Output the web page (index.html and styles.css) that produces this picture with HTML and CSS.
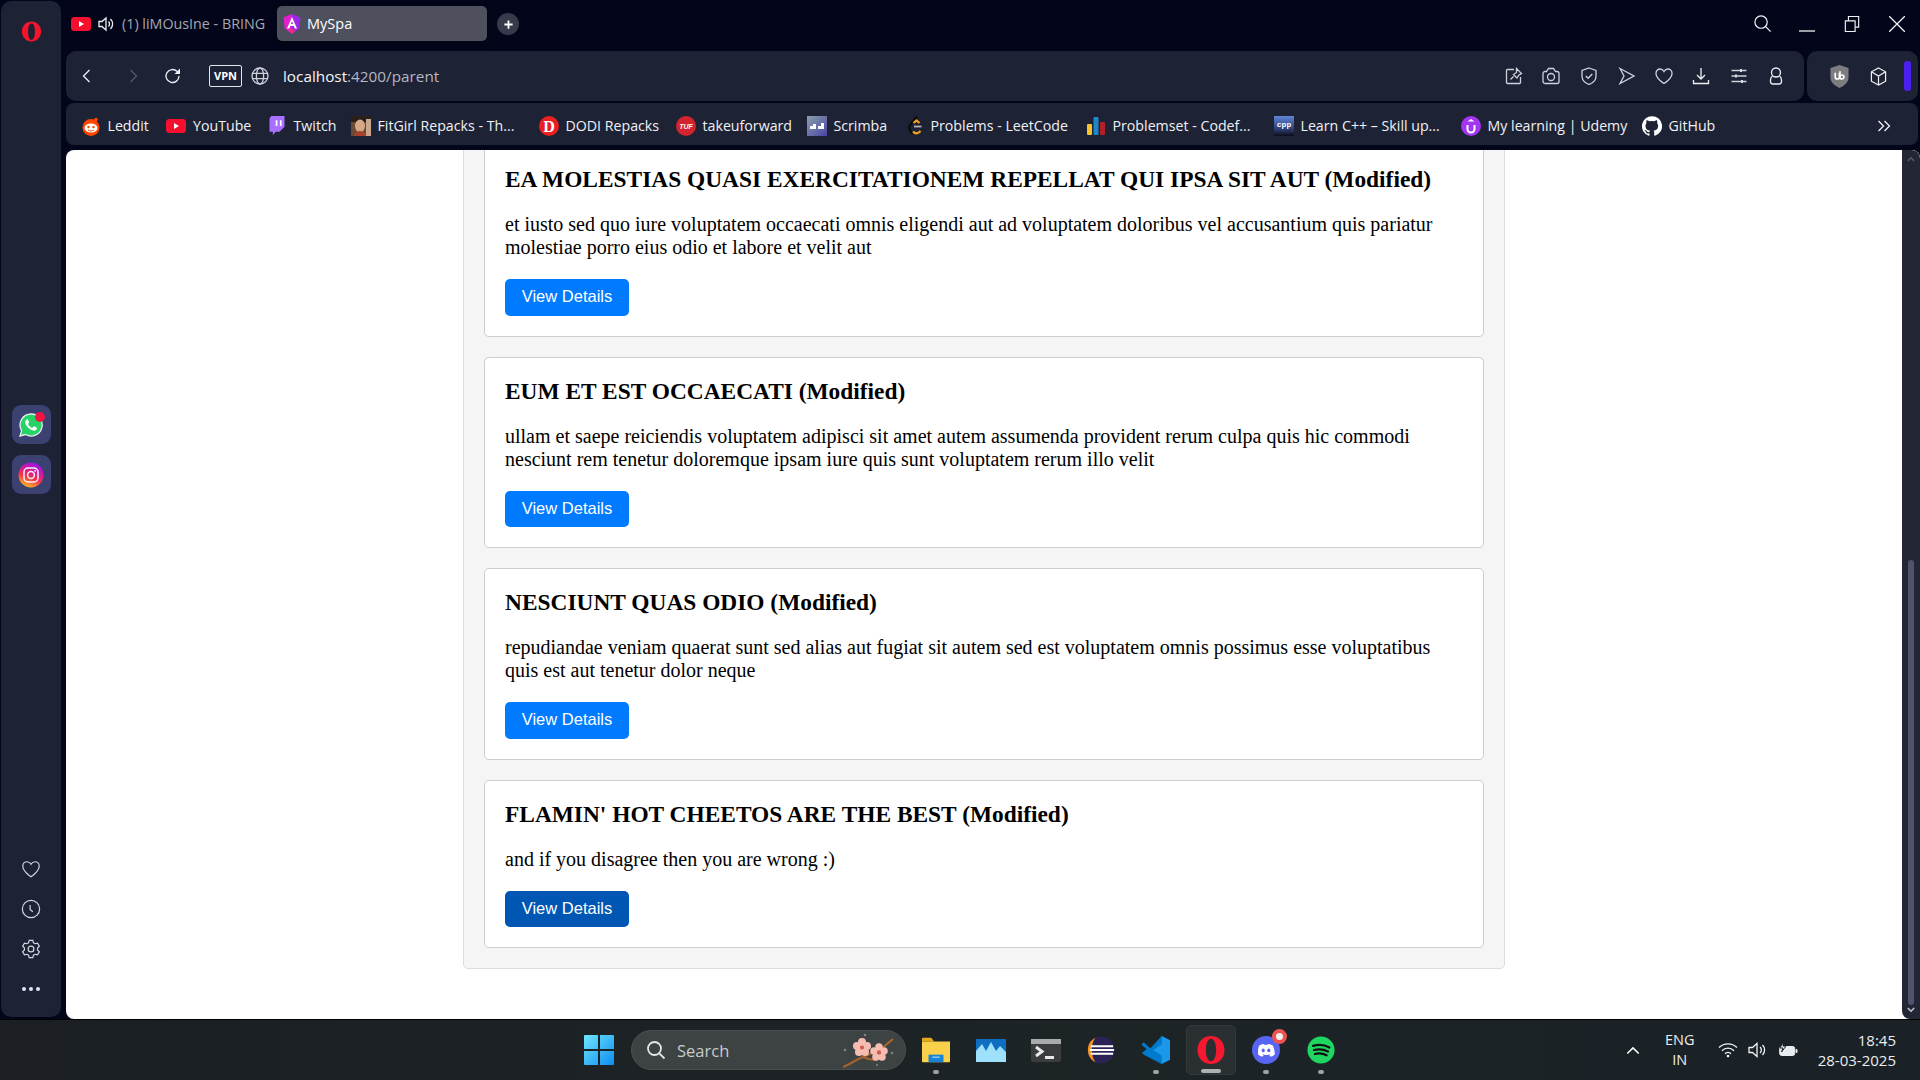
FILE: index.html
```html
<!DOCTYPE html>
<html lang="en">
<head>
<meta charset="utf-8">
<title>MySpa</title>
<link rel="stylesheet" href="styles.css">
</head>
<body>
<div class="desktop">
  <div class="browser">
    <aside class="sidebar">
      <svg class="opera-logo" viewBox="0 0 22 22"><path fill="#f4142b" fill-rule="evenodd" d="M11 0.500C5 0.500 1 5.200 1 11s4 10.500 10 10.500S21 16.800 21 11 17 .5 11 .5zm0 1.800c2.300 0 3.600 3.900 3.600 8.700s-1.300 8.700-3.600 8.700-3.600-3.900-3.600-8.700 1.300-8.700 3.600-8.700z"/></svg>
      <div class="tiles">
        <div class="tile">
          <svg class="tile-icon" viewBox="0 0 26 26"><path fill="#25d366" stroke="#e9ecef" stroke-width="1.300" d="M13 2a11 11 0 0 0-9.400 16.600L2 24l5.600-1.500A11 11 0 1 0 13 2z"/><path fill="#fff" d="M9 7.500c-.8 0-1.800 1.300-1.800 2.800 0 3 4.500 7.900 8.700 8.300 1.700.1 3-1.100 3-2.200 0-.6-.1-.8-.5-1l-2.200-1.100c-.4-.2-.6 0-.9.400l-.7.900c-.2.200-.5.300-.9.100-1.700-.8-2.800-1.900-3.600-3.500-.2-.3 0-.6.200-.8l.6-.7c.2-.3.200-.5.100-.8l-1-2.200c-.2-.5-.5-.6-1-.6z"/></svg>
          <span class="badge"></span>
        </div>
        <div class="tile">
          <svg class="tile-icon" viewBox="0 0 26 26"><defs><linearGradient id="ig" x1="0.300" y1="1" x2="0.700" y2="0"><stop offset="0" stop-color="#fdc01f"/><stop offset="0.400" stop-color="#f2304f"/><stop offset="0.750" stop-color="#c913b9"/><stop offset="1" stop-color="#8a1ce8"/></linearGradient></defs><circle cx="13" cy="13" r="12.500" fill="url(#ig)"/><rect x="6" y="6" width="14" height="14" rx="4" fill="none" stroke="#f3f3f6" stroke-width="1.500"/><circle cx="13" cy="13" r="3.400" fill="none" stroke="#f3f3f6" stroke-width="1.500"/><circle cx="17.200" cy="8.800" r="1" fill="#f3f3f6"/></svg>
        </div>
      </div>
      <div class="side-tools">
        <svg class="side-icon" viewBox="0 0 22 22"><path class="line" d="M11 19.500S2 14 2 7.800C2 5 4 3 6.500 3 8.400 3 10 4 11 5.800 12 4 13.600 3 15.500 3 18 3 20 5 20 7.800 20 14 11 19.500 11 19.500z"/></svg>
        <svg class="side-icon" viewBox="0 0 22 22"><circle class="line" cx="11" cy="11" r="9.500"/><path class="line" d="M10 6.500v5l3 2.500"/></svg>
        <svg class="side-icon" viewBox="0 0 22 22"><path class="line" d="M9 1.500h4l.7 2.700 1.800 1 2.700-.7 2 3.400-2 2v2.200l2 2-2 3.400-2.700-.7-1.800 1-.7 2.700H9l-.7-2.700-1.800-1-2.700.7-2-3.400 2-2V9.900l-2-2 2-3.400 2.700.7 1.800-1z"/><circle class="line" cx="11" cy="11" r="3.200"/></svg>
        <div class="more-dots"><i></i><i></i><i></i></div>
      </div>
    </aside>

    <div class="main">
      <div class="tabstrip">
        <div class="tab-idle">
          <svg class="fav" viewBox="0 0 20 20"><rect y="3" width="20" height="14" rx="3.500" fill="#f70f2f"/><path fill="#fff" d="M8 7l5 3-5 3z"/></svg>
          <svg class="tab-speaker" viewBox="0 0 18 18"><path class="line-w" d="M2 6.500h3L9 3v12l-4-3.500H2z"/><path class="line-w" d="M11.500 6.500a3.500 3.500 0 0 1 0 5M13.500 4a7 7 0 0 1 0 10"/></svg>
          <span class="tab-title-dim">(1) liMOusIne - BRING</span>
        </div>
        <div class="tab-active">
          <svg class="fav" viewBox="0 0 20 20"><path fill="#e41fd0" d="M10 0L1.500 3.500l1.300 11L10 20z"/><path fill="#9c27e8" d="M10 0l8.500 3.500-1.300 11L10 20z"/><path fill="#fff" d="M10 3L5 14.500h2.200l1-2.500h3.600l1 2.500H15zm-1.100 7L10 7.300l1.100 2.700z"/><path fill="#ff2a6d" d="M6.500 15.500h7L10 20z"/></svg>
          <span class="tab-title">MySpa</span>
        </div>
        <div class="new-tab">
          <svg viewBox="0 0 12 12"><path d="M6 1.500v9M1.500 6h9" stroke="#fff" stroke-width="2" fill="none"/></svg>
        </div>
        <div class="win-controls">
          <svg class="win-search" viewBox="0 0 20 20"><circle class="line-w" cx="8.500" cy="8.500" r="6.500"/><path class="line-w" d="M13.300 13.300L18.500 18.500"/></svg>
          <svg class="win-btn win-min" viewBox="0 0 16 16"><path class="line-w" d="M0 15h16"/></svg>
          <svg class="win-btn" viewBox="0 0 16 18"><path class="line-w" d="M.5 5.500h11v12H.5z"/><path class="line-w" d="M4 5.500V.5h11.500v12H11.500"/></svg>
          <svg class="win-btn" viewBox="0 0 16 16"><path class="line-w" d="M0 0l16 16M16 0L0 16"/></svg>
        </div>
      </div>

      <div class="toolbar">
        <div class="addressbar">
          <svg class="nav-back" viewBox="0 0 16 16"><path class="line-b" d="M10.500 2L4.500 8l6 6"/></svg>
          <svg class="nav-forward" viewBox="0 0 16 16"><path class="line-dim" d="M5.500 2l6 6-6 6"/></svg>
          <svg class="nav-reload" viewBox="0 0 18 18"><path class="line-b" d="M15 9a6.500 6.500 0 1 1-2-4.700L15 6"/><path fill="#eef0f4" d="M16 1.500V7h-5.500z"/></svg>
          <div class="vpn">VPN</div>
          <svg class="globe" viewBox="0 0 18 18"><circle class="line-g" cx="9" cy="9" r="8"/><ellipse class="line-g" cx="9" cy="9" rx="3.600" ry="8"/><path class="line-g" d="M1.500 6.300h15M1.500 11.700h15"/></svg>
          <div class="url"><span class="url-host">localhost</span><span class="url-rest">:4200/parent</span></div>
          <div class="tools">
            <span class="tool"><svg viewBox="0 0 18 18"><path class="line-g" d="M9 2.500H2.500a1 1 0 0 0-1 1v12a1 1 0 0 0 1 1h12a1 1 0 0 0 1-1V10"/><path class="line-g" d="M11.500 1.500l5 5-2.500 1.500-2 3-3.500-3.500 3-2zM8.500 9.500l-3 3"/></svg></span>
            <span class="tool"><svg viewBox="0 0 18 18"><path class="line-g" d="M1 6.500a2 2 0 0 1 2-2h1.500l2-3h5l2 3H15a2 2 0 0 1 2 2v8a2 2 0 0 1-2 2H3a2 2 0 0 1-2-2z"/><circle class="line-g" cx="9" cy="10" r="3.500"/></svg></span>
            <span class="tool"><svg viewBox="0 0 18 18"><path class="line-g" d="M9 1l7 2.500V9c0 4-3 7-7 8.500C5 16 2 13 2 9V3.500z"/><path class="line-g" d="M5.800 9l2.300 2.300 4.200-4.300"/></svg></span>
            <span class="tool"><svg viewBox="0 0 18 18"><path class="line-g" d="M3 1.500L17 9 3 16.500 7 9z"/></svg></span>
            <span class="tool"><svg viewBox="0 0 18 18"><path class="line-g" d="M9 16.500S1 12 1 6.300C1 3.700 2.900 2 5 2c1.800 0 3.200 1 4 2.500C9.800 3 11.200 2 13 2c2.100 0 4 1.700 4 4.300C17 12 9 16.500 9 16.500z"/></svg></span>
            <span class="tool"><svg viewBox="0 0 18 18"><path class="line-b" d="M9 1v10.500M5 8l4 4 4-4M1.500 13v3.500h15V13"/></svg></span>
            <span class="tool"><svg viewBox="0 0 18 18"><path class="line-g" d="M1.500 3.500h15M1.500 9h15M1.500 14.500h15"/><path fill="#d9dbe3" d="M10 2h2v3h-2zM5 7.500h2v3H5zM11 13h2v3h-2z"/></svg></span>
            <span class="tool"><svg viewBox="0 0 18 18"><circle class="line-b" cx="9" cy="5.500" r="4.500"/><path class="line-b" d="M5.500 9a5 5 0 0 0-2 4v1.500a2.500 2.500 0 0 0 2.500 2.500h6a2.500 2.500 0 0 0 2.500-2.500V13a5 5 0 0 0-2-4"/></svg></span>
          </div>
        </div>
        <div class="extensions">
          <svg class="ext-shield" viewBox="0 0 20 24"><path fill="#7d7d80" d="M10 0l9.500 3v10c0 5-4 8.500-9.500 11C4.500 21.500.5 18 .5 13V3z"/><path fill="none" stroke="#fff" stroke-width="1.700" d="M5.500 8v4.500a2.200 2.200 0 0 0 4.400 0V8M10.500 6.500v6a2.100 2.100 0 1 0 4.200 0 2.100 2.100 0 1 0-4.200 0"/></svg>
          <svg class="ext-box" viewBox="0 0 18 20"><path class="line-w" d="M9 1l7.500 4v10L9 19l-7.500-4V5zM1.500 5L9 9.500 16.500 5M9 9.500V19"/></svg>
          <span class="ext-bar"></span>
        </div>
      </div>

      <nav class="bookmarks">
        <a class="bm"><svg class="fav" viewBox="0 0 20 20"><circle cx="10" cy="11.500" r="8.500" fill="#ff4500"/><ellipse cx="10" cy="12" rx="6.500" ry="4.500" fill="#fff"/><circle cx="7.500" cy="11" r="1.200" fill="#ff4500"/><circle cx="12.500" cy="11" r="1.200" fill="#ff4500"/><circle cx="15" cy="3.500" r="1.800" fill="#ff4500"/><path d="M7 14c2 1.300 4 1.300 6 0" stroke="#ff4500" fill="none"/></svg><span>Leddit</span></a>
        <a class="bm"><svg class="fav" viewBox="0 0 20 20"><rect y="3" width="20" height="14" rx="3.500" fill="#f70f2f"/><path fill="#fff" d="M8 7l5 3-5 3z"/></svg><span>YouTube</span></a>
        <a class="bm"><svg class="fav" viewBox="0 0 20 24"><path fill="#a970ff" d="M3 0h16v13l-6 6H8.500L5 23v-4H1V3z"/><path fill="#fff" d="M8.500 5h2v7h-2zM13.500 5h2v7h-2z"/></svg><span>Twitch</span></a>
        <a class="bm"><svg class="fav" viewBox="0 0 20 20"><rect width="20" height="20" fill="#6b4a33"/><rect width="20" height="6" fill="#2a2019"/><ellipse cx="9" cy="10" rx="5" ry="6.500" fill="#d5a88a"/><path d="M3 20c1-4 4-5 6-5s5 1 7 5z" fill="#a8402e"/><rect x="15" y="3" width="5" height="17" fill="#caa78c"/></svg><span>FitGirl Repacks - Th...</span></a>
        <a class="bm"><svg class="fav" viewBox="0 0 20 20"><circle cx="10" cy="10" r="10" fill="#e8201f"/><text class="fav-letter" x="10" y="15.500" text-anchor="middle">D</text></svg><span>DODI Repacks</span></a>
        <a class="bm"><svg class="fav" viewBox="0 0 20 20"><circle cx="10" cy="10" r="10" fill="#d2232e"/><text class="fav-tuf" x="10" y="12.500" text-anchor="middle">TUF</text></svg><span>takeuforward</span></a>
        <a class="bm"><svg class="fav" viewBox="0 0 20 20"><defs><linearGradient id="sc" x1="0" y1="0" x2="1" y2="1"><stop offset="0" stop-color="#8aa0a8"/><stop offset="1" stop-color="#4b44a8"/></linearGradient></defs><rect width="20" height="20" fill="url(#sc)"/><path fill="#fff" d="M3 10h6v3H3zM6 8h3v2H6zM11 10h6v3h-6zM14 7h3v3h-3z"/></svg><span>Scrimba</span></a>
        <a class="bm bm-lc"><svg class="fav" viewBox="0 0 20 20"><path d="M12 .5L5 9c-1.500 2-1 4 .5 6L8 18" fill="none" stroke="#0b0b0b" stroke-width="2.200"/><path d="M8.500 7l3-2.500 3 2.500M8 15.500c2 2.500 4 2.500 6.500.5l1-1" fill="none" stroke="#f6a21e" stroke-width="2.200"/><path d="M9 10.500h7.500" stroke="#b5b5b5" stroke-width="1.800"/></svg><span>Problems - LeetCode</span></a>
        <a class="bm"><svg class="fav" viewBox="0 0 20 20"><rect x="1" y="8" width="5" height="11" rx="1" fill="#f4c430"/><rect x="7.500" y="1" width="5" height="18" rx="1" fill="#1e88c7"/><rect x="14" y="6" width="5" height="13" rx="1" fill="#b3202a"/></svg><span>Problemset - Codef...</span></a>
        <a class="bm"><svg class="fav" viewBox="0 0 20 20"><defs><linearGradient id="cp" x1="0" y1="0" x2="0" y2="1"><stop offset="0" stop-color="#5f86d8"/><stop offset="0.650" stop-color="#2f3f74"/><stop offset="1" stop-color="#0a0d18"/></linearGradient></defs><rect width="20" height="20" fill="url(#cp)"/><text class="fav-cpp" x="10" y="11" text-anchor="middle">cpp</text></svg><span>Learn C++ – Skill up...</span></a>
        <a class="bm"><svg class="fav" viewBox="0 0 20 20"><circle cx="10" cy="10" r="10" fill="#a435f0"/><path d="M6.500 9v4a3.500 3.500 0 0 0 7 0V9" stroke="#fff" stroke-width="2" fill="none"/><path d="M10 3l3.500 2.500h-7z" fill="#fff"/></svg><span>My learning | Udemy</span></a>
        <a class="bm"><svg class="fav" viewBox="0 0 20 20"><path fill="#fff" fill-rule="evenodd" d="M10 .2a10 10 0 0 0-3.200 19.500c.5.100.7-.2.7-.5v-1.700c-2.800.6-3.400-1.300-3.400-1.300-.5-1.200-1.100-1.500-1.100-1.500-.9-.6.100-.6.100-.6 1 .1 1.500 1 1.500 1 .9 1.500 2.300 1.100 2.900.8.100-.6.400-1.100.6-1.300-2.200-.3-4.600-1.100-4.600-4.900 0-1.100.4-2 1-2.700-.1-.2-.4-1.300.1-2.700 0 0 .8-.3 2.700 1a9.500 9.500 0 0 1 5 0c1.900-1.300 2.700-1 2.700-1 .5 1.400.2 2.500.1 2.700.6.700 1 1.600 1 2.700 0 3.800-2.300 4.600-4.600 4.900.4.300.7.900.7 1.900v2.800c0 .3.200.6.700.5A10 10 0 0 0 10 .2z"/></svg><span>GitHub</span></a>
        <svg class="bm-more" viewBox="0 0 14 14"><path class="line-b" d="M1.500 2l5 5-5 5M7.500 2l5 5-5 5"/></svg>
      </nav>

      <div class="viewport">
        <div class="page">
          <section class="post-list">
            <article class="post">
              <h3>EA MOLESTIAS QUASI EXERCITATIONEM REPELLAT QUI IPSA SIT AUT (Modified)</h3>
              <p>et iusto sed quo iure voluptatem occaecati omnis eligendi aut ad voluptatem doloribus vel accusantium quis pariatur molestiae porro eius odio et labore et velit aut</p>
              <button class="details">View Details</button>
            </article>
            <article class="post">
              <h3>EUM ET EST OCCAECATI (Modified)</h3>
              <p>ullam et saepe reiciendis voluptatem adipisci sit amet autem assumenda provident rerum culpa quis hic commodi nesciunt rem tenetur doloremque ipsam iure quis sunt voluptatem rerum illo velit</p>
              <button class="details">View Details</button>
            </article>
            <article class="post">
              <h3>NESCIUNT QUAS ODIO (Modified)</h3>
              <p>repudiandae veniam quaerat sunt sed alias aut fugiat sit autem sed est voluptatem omnis possimus esse voluptatibus quis est aut tenetur dolor neque</p>
              <button class="details">View Details</button>
            </article>
            <article class="post">
              <h3>FLAMIN' HOT CHEETOS ARE THE BEST (Modified)</h3>
              <p>and if you disagree then you are wrong :)</p>
              <button class="details details-hover">View Details</button>
            </article>
          </section>
        </div>
        <div class="scrollbar">
          <svg class="sb-arrow" viewBox="0 0 10 7"><path d="M1 6l4-4 4 4" stroke="#55596a" stroke-width="2" fill="none"/></svg>
          <div class="sb-track"><div class="sb-thumb"></div></div>
          <svg class="sb-arrow" viewBox="0 0 10 7"><path d="M1 1l4 4 4-4" stroke="#c5c6cd" stroke-width="2" fill="none"/></svg>
        </div>
      </div>
    </div>
  </div>

  <footer class="taskbar">
    <svg class="start" viewBox="0 0 30 30"><defs><linearGradient id="win" x1="0" y1="0" x2="1" y2="1"><stop offset="0" stop-color="#6fe6ff"/><stop offset="1" stop-color="#0c8df0"/></linearGradient></defs><path fill="url(#win)" d="M0 1a1 1 0 0 1 1-1h13v14H0zM16 0h13a1 1 0 0 1 1 1v13H16zM0 16h14v14H1a1 1 0 0 1-1-1zM16 16h14v13a1 1 0 0 1-1 1H16z"/></svg>
    <div class="search">
      <svg class="search-icon" viewBox="0 0 20 20"><circle cx="8.500" cy="8.500" r="6.500" fill="none" stroke="#e5e7e8" stroke-width="1.800"/><path d="M13.300 13.300L18.500 18.500" stroke="#e5e7e8" stroke-width="1.800"/></svg>
      <span class="search-text">Search</span>
      <svg class="blossom" viewBox="0 0 60 36"><path d="M6 35C14 32 18 28 26 25L44 17 56 7M26 25C30 27 33 28 38 28" stroke="#a5632c" stroke-width="2.200" fill="none"/><g fill="#f5bdb2"><circle cx="20" cy="14" r="4"/><circle cx="25" cy="10" r="4"/><circle cx="30" cy="14" r="4"/><circle cx="28" cy="20" r="4"/><circle cx="22" cy="20" r="4"/><circle cx="37" cy="19" r="3.800"/><circle cx="42" cy="15" r="3.800"/><circle cx="47" cy="19" r="3.800"/><circle cx="45" cy="25" r="3.800"/><circle cx="39" cy="25" r="3.800"/></g><g fill="#d9564f"><circle cx="25" cy="15.500" r="2"/><circle cx="42" cy="20.500" r="2"/></g><g fill="#7f8385"><circle cx="8" cy="18" r="1.300"/><circle cx="28" cy="3" r="1.300"/><circle cx="55" cy="21" r="1.300"/><circle cx="40" cy="33" r="1"/></g></svg>
    </div>
    <div class="apps">
      <div class="app app-on">
        <svg viewBox="0 0 30 30"><path fill="#e6a817" d="M0 3a1 1 0 0 1 1-1h9l3 4H0z"/><path fill="#fbd04a" d="M0 6h30v21a1 1 0 0 1-1 1H1a1 1 0 0 1-1-1z"/><path fill="#1783d8" d="M7 20h16v8H7z"/><path fill="#8fd0f5" d="M11 22h8v1.500h-8z"/></svg>
      </div>
      <div class="app">
        <svg class="app-flat" viewBox="0 0 30 23"><rect width="30" height="23" rx="1" fill="#0e6fc2"/><path fill="#9fe0fb" d="M0 12l6-7 4 7 5-9 5 9 4-5 6 6v10H0z"/></svg>
      </div>
      <div class="app">
        <svg class="app-flat" viewBox="0 0 30 23"><rect width="30" height="23" rx="2" fill="#3a3c3f"/><rect width="30" height="5" fill="#a9abae"/><path d="M5 8l6 4.500-6 4.500" stroke="#e8e8e8" stroke-width="3" fill="none"/><path d="M14 17h9v3h-9z" fill="#e8e8e8"/></svg>
      </div>
      <div class="app">
        <svg viewBox="0 0 30 30"><circle cx="15" cy="15" r="14.500" fill="#2c2255"/><path d="M9 2C3 5 1 10 1 15s2 10 8 13C4 22 4 8 9 2z" fill="#f7941e"/><path d="M4 10h24v2H4zM3 14h26v2H3zM4 18h24v2H4z" fill="#fff"/></svg>
      </div>
      <div class="app app-on">
        <svg viewBox="0 0 30 30"><path fill="#0065a9" d="M21 0l9 4.500v21L21 30 9 18l12-9z"/><path fill="#007acc" d="M21 0v30L2 20l-2-2 5-4-5-4V8l2-1 7 6z"/><path fill="#1f9cf0" d="M21 0l9 4.500v21L21 30V21l-9-6 9-6z" opacity=".9"/></svg>
      </div>
      <div class="app app-current">
        <svg viewBox="0 0 30 30"><path fill="#f4192e" fill-rule="evenodd" d="M15 0C6.500 0 .5 6.500.5 15S6.500 30 15 30s14.500-6.500 14.500-15S23.500 0 15 0zm0 3c3.500 0 5.500 5.500 5.500 12S18.500 27 15 27s-5.500-5.500-5.500-12S11.500 3 15 3z"/></svg>
      </div>
      <div class="app app-on">
        <svg viewBox="0 0 30 30"><circle cx="15" cy="15" r="15" fill="#5865f2"/><path fill="#fff" d="M8 10c2-1 4-1.500 4.500-1.500l.5 1h4l.5-1c.5 0 2.500.5 4.500 1.500 2 3.500 2.500 7 2.300 10-1.800 1.300-3.500 2-4.800 2l-1-1.700c.8-.3 1.300-.6 1.800-1-3 1.300-6.600 1.300-9.600 0 .5.400 1 .7 1.800 1L11.500 22c-1.300 0-3-.7-4.800-2C6.500 17 6 13.500 8 10z"/><ellipse cx="12" cy="15.500" rx="1.700" ry="2" fill="#5865f2"/><ellipse cx="18" cy="15.500" rx="1.700" ry="2" fill="#5865f2"/></svg>
        <span class="app-badge"></span>
      </div>
      <div class="app app-on">
        <svg viewBox="0 0 30 30"><circle cx="15" cy="15" r="14.500" fill="#1ed760"/><path d="M6.500 10.500c6-1.500 12.500-1 17.500 1.800M7.500 15c5-1.200 10.500-.8 15 1.600M8.500 19.300c4-1 8.500-.7 12.500 1.300" stroke="#111" stroke-width="2.400" fill="none" stroke-linecap="round"/></svg>
      </div>
    </div>
    <div class="tray">
      <svg class="tray-chevron" viewBox="0 0 16 10"><path d="M1.500 8.500L8 2l6.500 6.500" stroke="#fff" stroke-width="1.800" fill="none"/></svg>
      <div class="lang"><span>ENG</span><span>IN</span></div>
      <svg class="tray-icon" viewBox="0 0 20 16"><path class="line-w" d="M1 5.500a13 13 0 0 1 18 0M4 8.700a8.500 8.500 0 0 1 12 0M7 11.700a4 4 0 0 1 6 0"/><circle cx="10" cy="14" r="1.300" fill="#fff"/></svg>
      <svg class="tray-icon" viewBox="0 0 20 16"><path class="line-w" d="M1 5.500h3.500L9 1.500v13l-4.500-4H1zM12 5a4 4 0 0 1 0 6M14.500 3a7 7 0 0 1 0 10"/></svg>
      <svg class="tray-icon" viewBox="0 0 20 16"><rect x="1.700" y="4.500" width="15" height="9" rx="2" fill="#e9ecee" stroke="#e9ecee"/><rect x="17.500" y="7" width="2" height="4" rx="1" fill="#e9ecee"/><path d="M5 0L2 6h3l-1.500 4L8 4H5z" fill="#e9ecee" stroke="#1b2125"/></svg>
      <div class="clock"><span>18:45</span><span>28-03-2025</span></div>
    </div>
  </footer>
</div>
</body>
</html>
```

FILE: styles.css
```css
* { box-sizing: border-box; }
html, body { margin: 0; height: 100%; overflow: hidden; }
body { font-family: "Open Sans", "Noto Sans", sans-serif; color: #fff; background: #03061a; }
svg { display: block; flex: none; }

.line, .line-w, .line-b, .line-g, .line-dim { fill: none; stroke-width: 1.300; }
.line { stroke: #d6d8e0; }
.line-w { stroke: #f1f2f5; }
.line-b { stroke: #eef0f4; }
.line-g { stroke: #cfd1da; }
.line-dim { stroke: #55596a; }

.desktop { display: flex; flex-direction: column; height: 100vh; }
.browser { flex: 1; min-height: 0; display: flex; background: #03061a; }

/* sidebar */
.sidebar { width: 60px; margin: 1px 0 2px 1px; background: #1e2235; border-radius: 10px; display: flex; flex-direction: column; align-items: center; }
.opera-logo { width: 21px; height: 21px; margin-top: 20px; }
.tiles { display: flex; flex-direction: column; gap: 11px; margin-top: 363px; }
.tile { position: relative; width: 39px; height: 39px; border-radius: 9px; background: #3b4170; display: flex; align-items: center; justify-content: center; }
.tile-icon { width: 26px; height: 26px; }
.badge { position: absolute; top: 7px; right: 6px; width: 10px; height: 10px; border-radius: 50%; background: #f4123f; }
.side-tools { margin-top: auto; display: flex; flex-direction: column; align-items: center; gap: 20px; padding-bottom: 18px; }
.side-icon { width: 20px; height: 20px; }
.more-dots { display: flex; gap: 3px; height: 20px; align-items: center; }
.more-dots i { width: 4px; height: 4px; border-radius: 50%; background: #e4e5ea; }

/* main column */
.main { flex: 1; min-width: 0; display: flex; flex-direction: column; margin-left: 5px; }

.tabstrip { height: 51px; flex: none; display: flex; align-items: flex-start; padding-top: 6px; }
.fav { width: 20px; height: 20px; }
.tab-idle { width: 206px; height: 35px; display: flex; align-items: center; padding-left: 5px; overflow: hidden; flex: none; }
.tab-speaker { width: 18px; height: 18px; margin-left: 6px; }
.tab-title-dim { font-size: 14.300px; color: #a4a6b0; margin-left: 7px; white-space: nowrap; }
.tab-active { width: 210px; height: 35px; margin-left: 5px; background: #4e505d; border-radius: 5px; display: flex; align-items: center; padding-left: 5px; box-shadow: 0 2px 6px rgba(0, 0, 0, .4); }
.tab-title { font-size: 14.500px; margin-left: 5px; color: #fff; }
.new-tab { width: 22px; height: 22px; margin: 7px 0 0 10px; border-radius: 50%; background: #363a4a; display: flex; align-items: center; justify-content: center; }
.new-tab svg { width: 11px; height: 11px; }
.win-controls { margin-left: auto; display: flex; align-items: center; height: 35px; padding-right: 15px; }
.win-search { width: 19px; height: 19px; }
.win-btn { width: 16px; height: 16px; margin-left: 29px; }
.win-min { margin-left: 27px; }

.toolbar { flex: none; display: flex; gap: 3px; height: 50px; }
.addressbar { width: 1738px; background: #1e2235; border-radius: 10px; display: flex; align-items: center; padding-right: 9px; }
.nav-back { width: 16px; height: 16px; margin-left: 13px; }
.nav-forward { width: 16px; height: 16px; margin-left: 30px; }
.nav-reload { width: 18px; height: 18px; margin-left: 23px; }
.vpn { width: 33px; height: 22px; margin-left: 27px; border: 1px solid #e6e7ec; border-radius: 2px; font-size: 11px; font-weight: 700; line-height: 20px; text-align: center; }
.globe { width: 18px; height: 18px; margin-left: 9px; }
.url { font-size: 15.300px; margin-left: 14px; white-space: nowrap; }
.url-host { color: #f4f5f7; }
.url-rest { color: #b5b7c1; }
.tools { margin-left: auto; display: flex; }
.tool { width: 37.500px; display: flex; justify-content: center; }
.tool svg { width: 18px; height: 18px; }
.extensions { flex: 1; margin-right: 2px; background: #1e2235; border-radius: 10px; display: flex; align-items: center; padding-left: 23px; }
.ext-shield { width: 19px; height: 23px; }
.ext-box { width: 17px; height: 19px; margin-left: 21px; }
.ext-bar { width: 7px; height: 30px; border-radius: 3px; background: #4a1ff0; margin-left: 17px; }

.bookmarks { flex: none; height: 42px; margin: 2px 2px 0 0; background: #1e2235; border-radius: 8px; display: grid; grid-template-columns: 85.500px 100.500px 84px 188px 137px 131px 98px 181px 188px 187px 181px 100px 1fr; align-items: center; padding: 3px 0 0 14.500px; }
.bm { display: flex; align-items: center; gap: 7px; font-size: 14.200px; color: #f0f1f4; white-space: nowrap; }
.bm-lc { gap: 6px; }
.bm-more { width: 14px; height: 14px; justify-self: end; margin-right: 27px; }
.fav-letter { font-family: "Liberation Serif", serif; font-weight: 700; font-size: 16px; fill: #fff; }
.fav-tuf { font-family: "Liberation Sans", sans-serif; font-weight: 700; font-style: italic; font-size: 7px; fill: #fff; }
.fav-cpp { font-family: "Liberation Mono", monospace; font-weight: 700; font-size: 8px; fill: #fff; }

/* page */
.viewport { flex: 1; min-height: 0; margin-top: 5px; display: flex; overflow: hidden; border-radius: 8px 8px 0 8px; background: #fff; }
.page { flex: 1; min-width: 0; display: flex; flex-direction: column; justify-content: flex-end; padding-bottom: 50px; overflow: hidden; }
.post-list { flex: none; box-sizing: content-box; width: 1000px; margin: 0 auto; padding: 20px; border: 1px solid #ddd; border-radius: 5px; background: #f5f5f5; display: flex; flex-direction: column; gap: 20px; }
.post { border: 1px solid #ccc; border-radius: 5px; background: #fff; padding: 20px; color: #000; font-family: "Liberation Serif", serif; }
.post h3 { margin: 0 0 20px; font-size: 23.400px; line-height: 27px; font-weight: 700; }
.post p { margin: 0 0 20px; font-size: 20px; line-height: 23px; }
.details { display: block; width: 124px; height: 36.500px; padding: 0 0 1px; border: 0; border-radius: 5px; background: #007bff; color: #fff; font-family: "Liberation Sans", sans-serif; font-size: 16.500px; }
.details-hover { background: #0056b3; }

.scrollbar { width: 18px; flex: none; background: #232735; border-radius: 0 8px 0 8px; display: flex; flex-direction: column; align-items: center; padding: 6px 0; }
.sb-arrow { width: 8px; height: 6px; flex: none; }
.sb-track { flex: 1; width: 6px; display: flex; flex-direction: column; justify-content: flex-end; padding: 0 0 2px; }
.sb-thumb { height: 445px; border-radius: 3px; background: #50536d; }

/* taskbar */
.taskbar { flex: none; height: 61px; border-top: 1px solid #000; background: linear-gradient(90deg, #1b1f23, #1d2426 60%, #1a2127); display: flex; align-items: center; padding-left: 584px; }
.start { width: 30px; height: 30px; }
.search { width: 275px; height: 40px; margin-left: 17px; border-radius: 20px; background: #3d4243; border: 1px solid #4a4f50; display: flex; align-items: center; padding-left: 14px; position: relative; }
.search-icon { width: 20px; height: 20px; }
.search-text { font-size: 16.500px; color: #c8cbcc; margin-left: 11px; }
.blossom { position: absolute; right: 8px; top: 1px; width: 60px; height: 36px; }
.apps { display: flex; margin-left: 2px; }
.app { position: relative; width: 50px; height: 50px; margin: 0 2.500px; border-radius: 5px; display: flex; align-items: center; justify-content: center; }
.app svg { width: 28px; height: 28px; }
.app .app-flat { width: 30px; height: 23px; }
.app-on::after, .app-current::after { content: ""; position: absolute; bottom: 1px; left: 22px; width: 6px; height: 4px; border-radius: 2px; background: #a0a3a6; }
.app-current { background: #2a2f31; border: 1px solid #33383a; }
.app-current::after { left: 14px; width: 20px; background: #aeb1b3; }
.app-badge { position: absolute; top: 4px; right: 4px; width: 15px; height: 15px; border-radius: 50%; background: #f0f0f0; border: 4px solid #ef5350; }
.tray { margin-left: auto; display: flex; align-items: center; padding-right: 24px; }
.tray-chevron { width: 14px; height: 9px; }
.lang { display: flex; flex-direction: column; align-items: center; width: 40px; margin: 0 18px 0 20px; font-size: 14.500px; line-height: 20px; color: #eceded; }
.tray-icon { width: 20px; height: 16px; margin-right: 10px; }
.clock { display: flex; flex-direction: column; align-items: flex-end; margin-left: 10px; font-size: 15px; line-height: 20px; color: #eceded; }
```
